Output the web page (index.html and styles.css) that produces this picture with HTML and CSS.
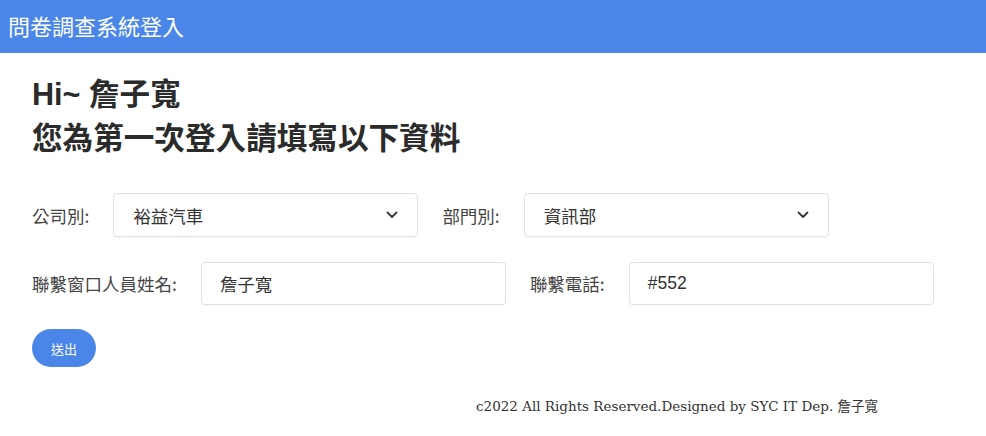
FILE: index.html
```html
<!DOCTYPE html>
<html lang="zh-Hant">
<head>
<meta charset="utf-8">
<title>問卷調查系統登入</title>
<link rel="stylesheet" href="styles.css">
</head>
<body>
<header class="topbar">
  <span class="brand">問卷調查系統登入</span>
</header>
<main class="content">
  <h2 class="title">Hi~ 詹子寬</h2>
  <h2 class="title">您為第一次登入請填寫以下資料</h2>
  <form class="form">
    <div class="row">
      <div class="field">
        <label class="label">公司別:</label>
        <div class="box select"><span>裕益汽車</span>
          <svg class="chev" width="12" height="8" viewBox="0 0 12 8"><path d="M1.5 1.5 L6 6 L10.5 1.5" fill="none" stroke="#343a40" stroke-width="1.8" stroke-linecap="round" stroke-linejoin="round"/></svg>
        </div>
      </div>
      <div class="field">
        <label class="label">部門別:</label>
        <div class="box select"><span>資訊部</span>
          <svg class="chev" width="12" height="8" viewBox="0 0 12 8"><path d="M1.5 1.5 L6 6 L10.5 1.5" fill="none" stroke="#343a40" stroke-width="1.8" stroke-linecap="round" stroke-linejoin="round"/></svg>
        </div>
      </div>
    </div>
    <div class="row">
      <div class="field">
        <label class="label">聯繫窗口人員姓名:</label>
        <div class="box input"><span>詹子寬</span></div>
      </div>
      <div class="field">
        <label class="label">聯繫電話:</label>
        <div class="box input"><span>#552</span></div>
      </div>
    </div>
    <div class="actions">
      <button type="button" class="btn">送出</button>
    </div>
  </form>
</main>
<footer class="footer">c2022 All Rights Reserved.Designed by SYC IT Dep. 詹子寬</footer>
</body>
</html>
```
FILE: styles.css
```css
* { box-sizing: border-box; }
html, body { margin: 0; padding: 0; background: #fff; }
body {
  font-family: "Noto Sans CJK TC", "Noto Sans", sans-serif;
  color: #333;
}
.topbar {
  height: 53px;
  background: #4a86e8;
  display: flex;
  align-items: center;
  padding: 0 8px 4px;
}
.brand {
  color: #fff;
  font-size: 22px;
  line-height: 1;
}
.content {
  padding: 0 32px;
}
.title {
  font-family: "Liberation Sans", "Noto Sans CJK TC", sans-serif;
  font-size: 30.6px;
  font-weight: 700;
  line-height: 36px;
  margin: 0 0 8px;
  color: #2b2b2b;
}
.title:first-child { margin-top: 23px; }
.form { margin-top: 37px; }
.row {
  display: flex;
  gap: 24px;
  margin-bottom: 25px;
}
.field {
  display: flex;
  align-items: center;
}
.label {
  font-size: 17.5px;
  color: #444;
  margin-right: 24px;
}
.box {
  width: 305px;
  height: 44px;
  border: 1px solid #dfe2e6;
  border-radius: 4px;
  background: #fff;
  display: flex;
  align-items: center;
  padding: 0 19px;
  font-size: 17.5px;
  color: #333;
  box-shadow: 0 1px 2px rgba(0,0,0,0.04);
}
.input { height: 43px; font-family: "Liberation Sans", "Noto Sans CJK TC", sans-serif; padding-left: 18px; }
.select { justify-content: space-between; padding-right: 19px; }
.chev { display: block; }
.actions { margin-top: -1px; }
.btn {
  width: 64px;
  height: 38px;
  border: none;
  border-radius: 19px;
  background: #4a86e8;
  color: #fff;
  font-family: "Noto Sans CJK TC", sans-serif;
  font-size: 13px;
  padding: 0;
}
.footer {
  display: flex;
  justify-content: flex-end;
  padding-right: 108px;
  margin-top: 28px;
  font-family: "DejaVu Serif", "Liberation Serif", "Noto Sans CJK TC", serif;
  font-size: 13.5px;
  color: #333;
}
```
